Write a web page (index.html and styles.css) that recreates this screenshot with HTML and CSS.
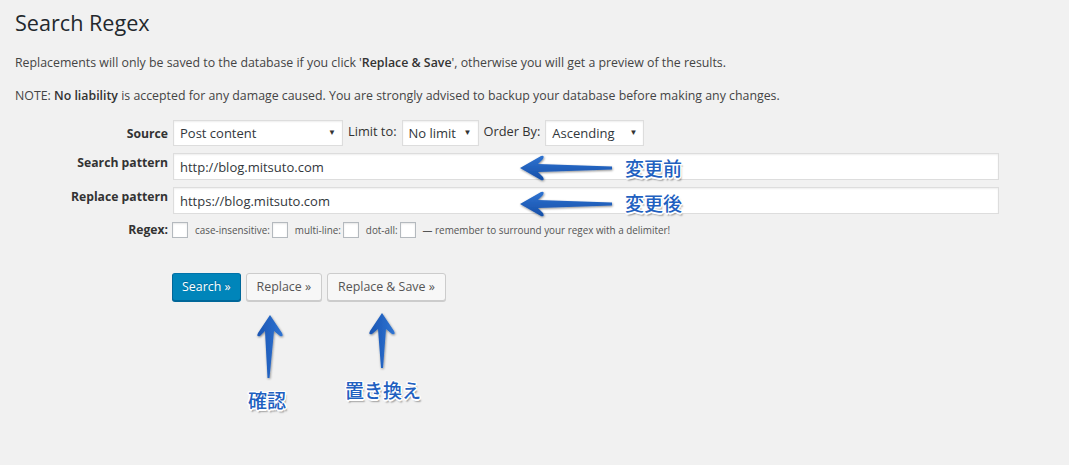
FILE: index.html
```html
<!DOCTYPE html>
<html lang="en">
<head>
<meta charset="utf-8">
<title>Search Regex</title>
<link rel="stylesheet" href="styles.css">
</head>
<body>
<div class="wrap">
  <h1 class="title">Search Regex</h1>
  <p class="note">Replacements will only be saved to the database if you click '<strong>Replace &amp; Save</strong>', otherwise you will get a preview of the results.</p>
  <p class="note">NOTE: <strong>No liability</strong> is accepted for any damage caused. You are strongly advised to backup your database before making any changes.</p>

  <form class="form">
    <div class="row row-source">
      <label class="lbl">Source</label>
      <div class="field inline">
        <span class="sel sel-source"><select><option>Post content</option></select></span>
        <span class="inl-lbl">Limit to:</span>
        <span class="sel sel-limit"><select><option>No limit</option></select></span>
        <span class="inl-lbl">Order By:</span>
        <span class="sel sel-order"><select><option>Ascending</option></select></span>
      </div>
    </div>
    <div class="row">
      <label class="lbl lbl-top">Search pattern</label>
      <div class="field"><input class="text" type="text" value="http://blog.mitsuto.com"></div>
    </div>
    <div class="row">
      <label class="lbl lbl-top">Replace pattern</label>
      <div class="field"><input class="text" type="text" value="https://blog.mitsuto.com"></div>
    </div>
    <div class="row row-regex">
      <label class="lbl">Regex:</label>
      <div class="field inline small">
        <span class="cb"></span>
        <span class="opt">case-insensitive:</span><span class="cb"></span>
        <span class="opt">multi-line:</span><span class="cb"></span>
        <span class="opt">dot-all:</span><span class="cb"></span>
        <span class="opt">— remember to surround your regex with a delimiter!</span>
      </div>
    </div>
    <div class="buttons">
      <button type="button" class="btn primary">Search »</button>
      <button type="button" class="btn">Replace »</button>
      <button type="button" class="btn">Replace &amp; Save »</button>
    </div>
  </form>
</div>

<svg class="annot" width="1069" height="465" viewBox="0 0 1069 465">
  <defs>
    <linearGradient id="gh" x1="0" y1="0" x2="0" y2="1">
      <stop offset="0" stop-color="#2f73d1"/>
      <stop offset="1" stop-color="#164fa8"/>
    </linearGradient>
    <linearGradient id="gv" x1="0" y1="0" x2="1" y2="0">
      <stop offset="0" stop-color="#1a55b3"/>
      <stop offset="1" stop-color="#2f74d2"/>
    </linearGradient>
    <filter id="sh" x="-20%" y="-20%" width="140%" height="140%">
      <feDropShadow dx="0.6" dy="1" stdDeviation="0.8" flood-color="#000" flood-opacity="0.45"/>
    </filter>
  </defs>
  <path filter="url(#sh)" fill="url(#gh)" d="M520 168 L541 156 Q545 155 543 159 L538 164 L612 166.5 L612 169.5 L538 172 L543 177 Q545 181 541 180 Z"/>
  <path filter="url(#sh)" fill="url(#gh)" d="M520 204 L541 192 Q545 191 543 195 L538 200 L612 202.5 L612 205.5 L538 208 L543 213 Q545 217 541 216 Z"/>
  <path filter="url(#sh)" fill="url(#gv)" d="M270 315 L282 333 Q284 337 280 336 L274 331 L269.5 378 L267.5 378 L265 331 L260 336 Q256 337 258 333 Z"/>
  <path filter="url(#sh)" fill="url(#gv)" d="M382 313 L394 331 Q396 335 392 334 L386 329 L383 368 L381 368 L378 329 L372 334 Q368 335 370 331 Z"/>
</svg>
<span class="jp jp-before">変更前</span>
<span class="jp jp-after">変更後</span>
<span class="jp jp-check">確認</span>
<span class="jp jp-replace">置き換え</span>
</body>
</html>
```

FILE: styles.css
```css
html, body {
  margin: 0;
  padding: 0;
  background: #f1f1f1;
}
body {
  position: relative;
  width: 1069px;
  height: 465px;
  overflow: hidden;
  font-family: "Open Sans", "Noto Sans", sans-serif;
  font-size: 13px;
  color: #444;
}
.wrap {
  padding: 0 0 0 15px;
}
.title {
  margin: 0;
  padding: 8px 0 0 0;
  font-size: 21.6px;
  font-weight: 400;
  line-height: 29px;
  color: #23282d;
}
.note {
  margin: 0;
  font-size: 12.35px;
  line-height: 20px;
}
.title + .note { margin-top: 16px; }
.note + .note { margin-top: 13px; }
.note strong { font-weight: 600; color: #333; }

.form {
  margin: 14px 0 0 0;
}
.row {
  display: grid;
  grid-template-columns: 153px 826px;
  column-gap: 5px;
  align-items: center;
  margin-bottom: 7px;
}
.lbl {
  text-align: right;
  font-weight: 700;
  font-size: 12.2px;
  color: #333;
}
.lbl-top {
  align-self: start;
  padding-top: 1px;
}
.field.inline {
  display: flex;
  align-items: center;
  gap: 5px;
}
.sel {
  position: relative;
  display: block;
}
.sel select {
  appearance: none;
  -webkit-appearance: none;
  display: block;
  height: 26px;
  margin: 0;
  padding: 0 20px 0 6px;
  border: 1px solid #ddd;
  border-radius: 0;
  background: #fff;
  box-shadow: inset 0 1px 2px rgba(0,0,0,.07);
  font-family: inherit;
  font-size: 13px;
  color: #32373c;
}
.sel::after {
  content: "▼";
  position: absolute;
  right: 7px;
  top: 6px;
  font-size: 8px;
  color: #333;
  pointer-events: none;
}
.sel-source select { width: 170px; }
.sel-limit select { width: 77px; }
.sel-order select { width: 99px; }
.inl-lbl {
  font-size: 12.8px;
  color: #333;
  margin-top: -4px;
}
.text {
  display: block;
  box-sizing: border-box;
  width: 826px;
  height: 27px;
  margin: 0;
  padding: 0 6px;
  border: 1px solid #ddd;
  background: #fff;
  box-shadow: inset 0 1px 2px rgba(0,0,0,.07);
  font-family: inherit;
  font-size: 13px;
  color: #32373c;
}
.row-regex {
  margin-top: 2px;
}
.small {
  font-size: 9.9px;
  color: #555;
}
.field.inline.small { gap: 0; }
.cb {
  display: inline-block;
  width: 14px;
  height: 14px;
  border: 1px solid #b4b9be;
  background: #fff;
  box-shadow: inset 0 1px 2px rgba(0,0,0,.1);
  margin-left: -1px;
}
.opt {
  margin: 0 3px 0 7px;
}
.buttons {
  display: flex;
  gap: 5px;
  margin: 35px 0 0 157px;
}
.btn {
  box-sizing: border-box;
  height: 28px;
  margin: 0;
  padding: 0 10px 2px;
  border: 1px solid #ccc;
  border-radius: 3px;
  background: #f7f7f7;
  box-shadow: 0 1px 0 #ccc;
  font-family: inherit;
  font-size: 12.4px;
  color: #555;
}
.btn.primary {
  padding: 0 9px 2px;
  background: #0085ba;
  border-color: #0073aa #006799 #006799;
  box-shadow: 0 1px 0 #006799;
  color: #fff;
  text-shadow: 0 -1px 1px #006799;
}

.annot {
  position: absolute;
  left: 0;
  top: 0;
  pointer-events: none;
}
.jp {
  position: absolute;
  font-family: "Noto Sans CJK JP", sans-serif;
  font-size: 19px;
  font-weight: 500;
  line-height: 1;
  color: #2160c0;
  text-shadow:
    1.5px 0 0 #fff, -1.5px 0 0 #fff, 0 1.5px 0 #fff, 0 -1.5px 0 #fff,
    1px 1px 0 #fff, -1px -1px 0 #fff, 1px -1px 0 #fff, -1px 1px 0 #fff,
    1.5px 2.5px 1.5px rgba(0,0,0,.35);
}
.jp-before { left: 625px; top: 158px; }
.jp-after { left: 625px; top: 193px; }
.jp-check { left: 248px; top: 390px; }
.jp-replace { left: 345px; top: 380px; }
```
